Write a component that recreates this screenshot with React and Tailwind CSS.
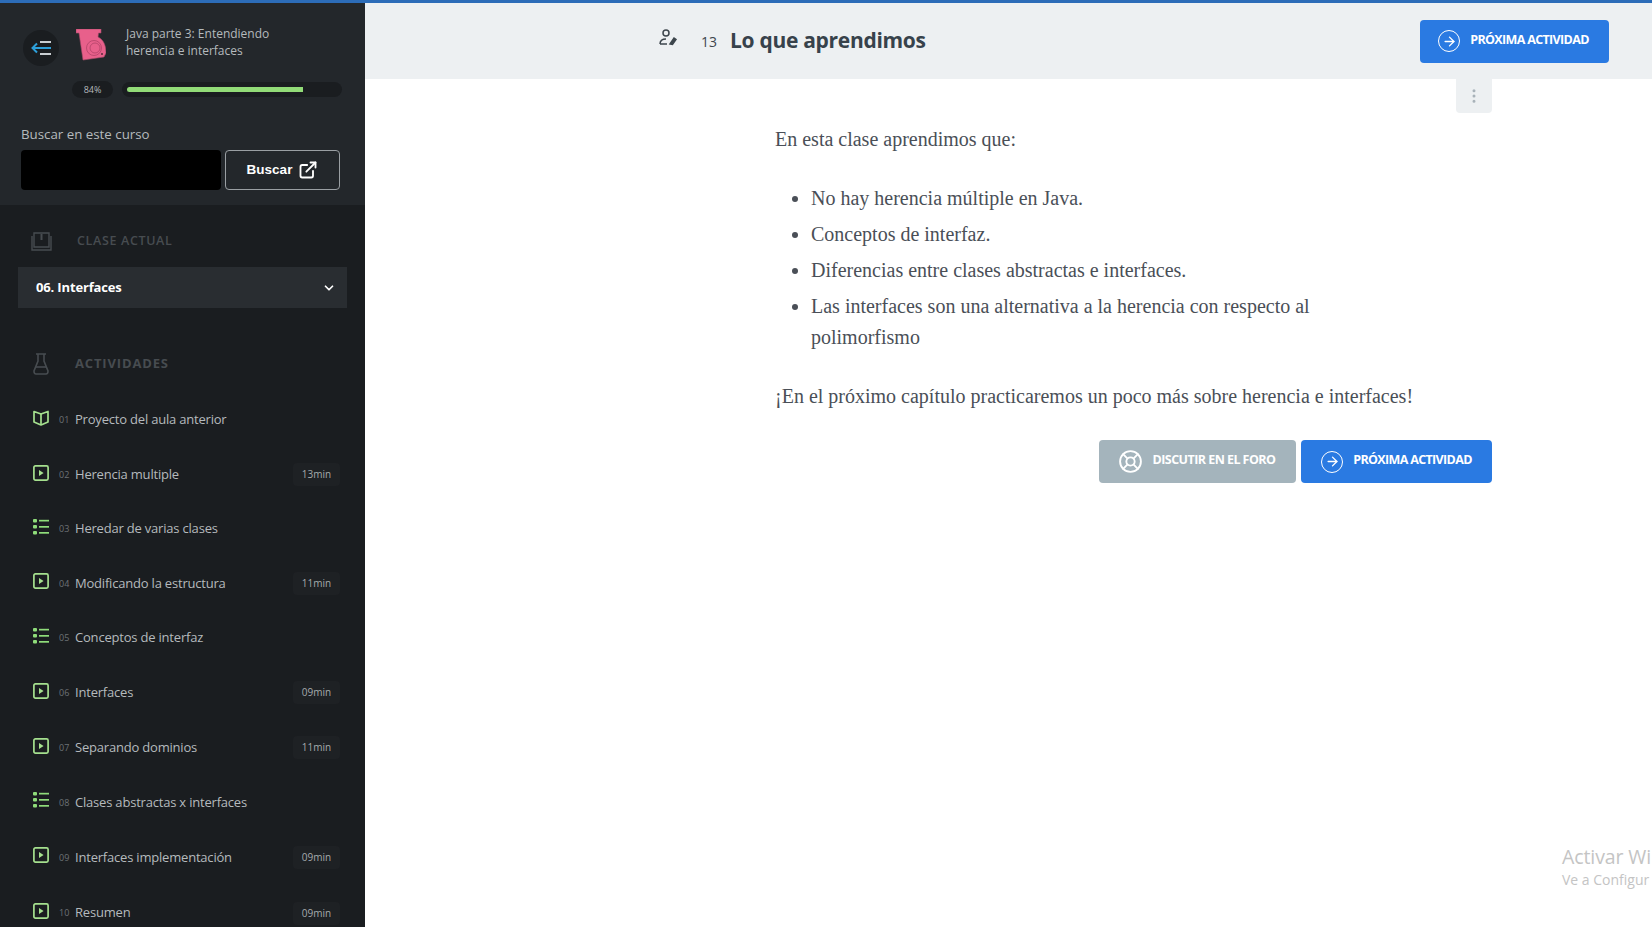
import React from 'react';
import { ExternalLink, ChevronDown, ArrowRight, LifeBuoy, EllipsisVertical } from 'lucide-react';

const activities = [
    { n: '01', title: 'Proyecto del aula anterior', type: 'book', row: 'h-[55px]' },
    { n: '02', title: 'Herencia multiple', type: 'video', time: '13min', row: 'h-[54.5px]' },
    { n: '03', title: 'Heredar de varias clases', type: 'list', row: 'h-[54px]' },
    { n: '04', title: 'Modificando la estructura', type: 'video', time: '11min', row: 'h-[54.5px]' },
    { n: '05', title: 'Conceptos de interfaz', type: 'list', row: 'h-[54.5px]' },
    { n: '06', title: 'Interfaces', type: 'video', time: '09min', row: 'h-[55px]' },
    { n: '07', title: 'Separando dominios', type: 'video', time: '11min', row: 'h-[55px]' },
    { n: '08', title: 'Clases abstractas x interfaces', type: 'list', row: 'h-[54.5px]' },
    { n: '09', title: 'Interfaces implementación', type: 'video', time: '09min', row: 'h-[55.5px]' },
    { n: '10', title: 'Resumen', type: 'video', time: '09min', row: 'h-[56px]' },
];

const ActivityIcon = ({ type }) => {
    if (type === 'video') {
        return (
            <svg width="16" height="16" viewBox="0 0 16 16" fill="none" className="shrink-0 -mt-1">
                <rect x="0.9" y="0.9" width="14.2" height="14.2" rx="1.5" stroke="#a5e08e" strokeWidth="1.7" />
                <path d="M6 5 L10.6 8 L6 11 Z" fill="#a5e08e" />
            </svg>
        );
    }
    if (type === 'list') {
        return (
            <svg width="16" height="16" viewBox="0 0 16 16" fill="#8fdc7a" className="shrink-0 -mt-1">
                <rect x="0" y="0" width="4" height="3.6" rx="1" />
                <rect x="0" y="6" width="4" height="3.6" rx="1" />
                <rect x="0" y="12" width="4" height="3.6" rx="1" />
                <rect x="6" y="0.8" width="10" height="1.7" />
                <rect x="6" y="7" width="10" height="1.7" />
                <rect x="6" y="13" width="10" height="1.7" />
            </svg>
        );
    }
    return (
        <svg width="16" height="16" viewBox="0 0 16 16" fill="none" stroke="#a5e08e" strokeWidth="1.7" strokeLinejoin="round" className="shrink-0 -mt-1">
            <path d="M1 1.5 L8 4 L15 1.5 V12 L8 15 L1 12 Z" />
            <path d="M8 4 V15" />
        </svg>
    );
};

const NextButton = ({ className }) => (
    <button className={`flex items-center justify-center gap-[10px] bg-[#2a7ae2] rounded text-white h-[43px] ${className}`}>
        <span className="w-[22px] h-[22px] rounded-full border-[1.8px] border-white flex items-center justify-center">
            <ArrowRight size={15} strokeWidth={2.2} />
        </span>
        <span className="text-[12.5px] font-bold tracking-[-0.65px] -mt-0.5">PRÓXIMA ACTIVIDAD</span>
    </button>
);

const App = () => {
    return (
        <div className="relative h-[927px] overflow-hidden bg-white font-['Open_Sans',sans-serif]">
            <div className="h-[3px] bg-[#2c6cb8]" />
            <div className="flex h-[924px]">
                <aside className="w-[365px] shrink-0 bg-[#1a1d20] overflow-hidden">
                    <div className="h-[202px] bg-[#23272b] px-[21px]">
                        <div className="flex items-center pt-[16px] h-[64px]">
                            <div className="w-9 h-9 rounded-full bg-[#1a1d20] flex items-center justify-center ml-[2px] mt-[10px]">
                                <svg width="20" height="14" viewBox="0 0 20 14" fill="none">
                                    <path d="M2 7 H20" stroke="#2d9fd9" strokeWidth="2" />
                                    <path d="M6 2.5 L1.5 7 L6 11.5" stroke="#2d9fd9" strokeWidth="2" />
                                    <path d="M9 1 H20 M9 13 H20" stroke="#c9ced2" strokeWidth="2" />
                                </svg>
                            </div>
                            <svg width="30" height="32" viewBox="0 0 30 32" className="ml-[17px] mt-[3px]">
                                <path d="M0 0 H25 V4 L22.5 4 L22 8 C28 11 30 17 30 24 L28 28 L7 31 L3 4 L0 4 Z" fill="#e8608b" stroke="#a84a6a" strokeWidth="0.6" />
                                <circle cx="18" cy="19" r="7.5" fill="none" stroke="#b8466c" strokeWidth="0.9" />
                                <circle cx="19" cy="19" r="5" fill="none" stroke="#b8466c" strokeWidth="0.9" />
                                <circle cx="26" cy="25" r="1" fill="#5a2a3a" />
                            </svg>
                            <p className="ml-[20px] -mt-[2px] text-[12px] leading-[17px] text-[#b5babd] w-[190px]">
                                Java parte 3: Entendiendo herencia e interfaces
                            </p>
                        </div>
                        <div className="flex items-center mt-[14px] ml-[51px]">
                            <span className="w-[41px] h-[17px] rounded-full bg-[#1a1d20] text-[#b5babd] text-[9px] flex items-center justify-center">84%</span>
                            <div className="ml-[9px] w-[220px] h-[15px] rounded-full bg-[#1a1d20] flex items-center px-[5px]">
                                <div className="w-[176px] h-[5px] rounded-l-full bg-[#92dc78]" />
                            </div>
                        </div>
                        <p className="mt-[27px] text-[13.3px] leading-[18px] text-[#b5babd]">Buscar en este curso</p>
                        <div className="flex mt-[7px] gap-1">
                            <div className="w-[200px] h-10 rounded bg-black" />
                            <button className="w-[115px] h-10 rounded border border-[#9a9fa3] flex items-center justify-center gap-[6px] text-white text-[13.5px] font-bold font-['Liberation_Sans',sans-serif]">
                                Buscar
                                <ExternalLink size={20} strokeWidth={2.2} />
                            </button>
                        </div>
                    </div>

                    <div className="flex items-center pl-[31px] pt-[10px] h-[62px]">
                        <svg width="21" height="19" viewBox="0 0 21 19" fill="none" stroke="#474c50" strokeWidth="1.4">
                            <path d="M3 1 H18 V15 H3 Z" />
                            <path d="M1 4 V18 H20 V4" />
                            <path d="M10.5 2 V8" strokeWidth="2" />
                        </svg>
                        <span className="ml-[25px] text-[12.5px] font-semibold tracking-[0.65px] text-[#474c50]">CLASE ACTUAL</span>
                    </div>
                    <div className="ml-[18px] w-[329px] h-[41px] bg-[#292d31] flex items-center justify-between pl-[18px] pr-[11px]">
                        <span className="text-white text-[13px] font-bold tracking-[-0.15px]">06. Interfaces</span>
                        <ChevronDown size={14} strokeWidth={3} className="text-white" />
                    </div>

                    <div className="flex items-center pl-[33px] h-[56px] mt-[28px]">
                        <svg width="16" height="22" viewBox="0 0 16 22" fill="none" stroke="#474c50" strokeWidth="1.6">
                            <path d="M3 1 H13 M5 1 V8 L1 18 Q1 21 3 21 H13 Q15 21 15 18 L11 8 V1" />
                            <path d="M3 14 H13" />
                        </svg>
                        <span className="ml-[26px] text-[13px] font-bold tracking-[0.85px] text-[#474c50]">ACTIVIDADES</span>
                    </div>

                    <ul className="mt-[0.5px]">
                        {activities.map(a => (
                            <li key={a.n} className={`flex items-center pl-[33px] pr-[25px] ${a.row}`}>
                                <ActivityIcon type={a.type} />
                                <span className="ml-[10px] w-[16px] text-[9px] text-[#6d7276]">{a.n}</span>
                                <span className="text-[13px] text-[#b5babd] tracking-[-0.2px] flex-1">{a.title}</span>
                                {a.time && (
                                    <span className="w-[47px] h-[23px] rounded bg-[#1e2124] text-[10px] text-[#a5aaad] flex items-center justify-center">{a.time}</span>
                                )}
                            </li>
                        ))}
                    </ul>
                </aside>

                <main className="flex-1 min-w-0">
                    <header className="h-[76px] bg-[#edf0f2] flex items-center pl-[294px] pr-[43px]">
                        <svg width="19" height="17" viewBox="0 0 19 17" fill="none" stroke="#3d464d" strokeWidth="1.5" className="-mt-2">
                            <circle cx="7" cy="4" r="3" />
                            <path d="M1 15 Q1 10 7 10 M1 15 H8" />
                            <path d="M11 15 L15 9 L17 10.5 L13.5 15.5 Z" fill="#3d464d" />
                        </svg>
                        <span className="ml-[23px] text-[14px] text-[#3d464d]">13</span>
                        <h1 className="ml-[13px] text-[21px] font-bold tracking-[-0.3px] text-[#37424b]">Lo que aprendimos</h1>
                        <NextButton className="ml-auto w-[189px] h-[41px] pr-[2px]" />
                    </header>
                    <div className="relative pl-[410px] w-[1127px] font-['Liberation_Serif',serif] text-[20px] text-[#4a4f57]">
                        <div className="absolute right-0 top-0 w-[36px] h-[34px] bg-[#edf0f2] rounded-b flex items-center justify-center">
                            <EllipsisVertical size={18} className="text-[#a8b2b9]" />
                        </div>
                        <p className="pt-[45px] leading-[31px]">En esta clase aprendimos que:</p>
                        <ul className="mt-[28px] pl-[36px] w-[584px] list-disc">
                            <li className="leading-[31px] mb-[5px]">No hay herencia múltiple en Java.</li>
                            <li className="leading-[31px] mb-[5px]">Conceptos de interfaz.</li>
                            <li className="leading-[31px] mb-[5px]">Diferencias entre clases abstractas e interfaces.</li>
                            <li className="leading-[31px]">Las interfaces son una alternativa a la herencia con respecto al polimorfismo</li>
                        </ul>
                        <p className="mt-[28px] leading-[31px] whitespace-nowrap">¡En el próximo capítulo practicaremos un poco más sobre herencia e interfaces!</p>
                        <div className="flex justify-end gap-[5px] mt-[28px] font-['Open_Sans',sans-serif]">
                            <button className="w-[197px] h-[43px] bg-[#a4b4bc] rounded flex items-center justify-center gap-[10px] text-white">
                                <LifeBuoy size={25} strokeWidth={1.8} className="-ml-0.5" />
                                <span className="text-[12.5px] font-bold tracking-[-0.55px] -mt-0.5">DISCUTIR EN EL FORO</span>
                            </button>
                            <NextButton className="w-[191px]" />
                        </div>
                    </div>
                </main>
            </div>
            <div className="absolute left-[1562px] top-[843px] whitespace-nowrap text-[#c4c4c4] font-['Open_Sans',sans-serif]">
                <p className="text-[19.5px] tracking-[-0.1px] leading-[27px]">Activar Wi</p>
                <p className="text-[14px] leading-[19px]">Ve a Configur</p>
            </div>
        </div>
    );
};

export default App;
